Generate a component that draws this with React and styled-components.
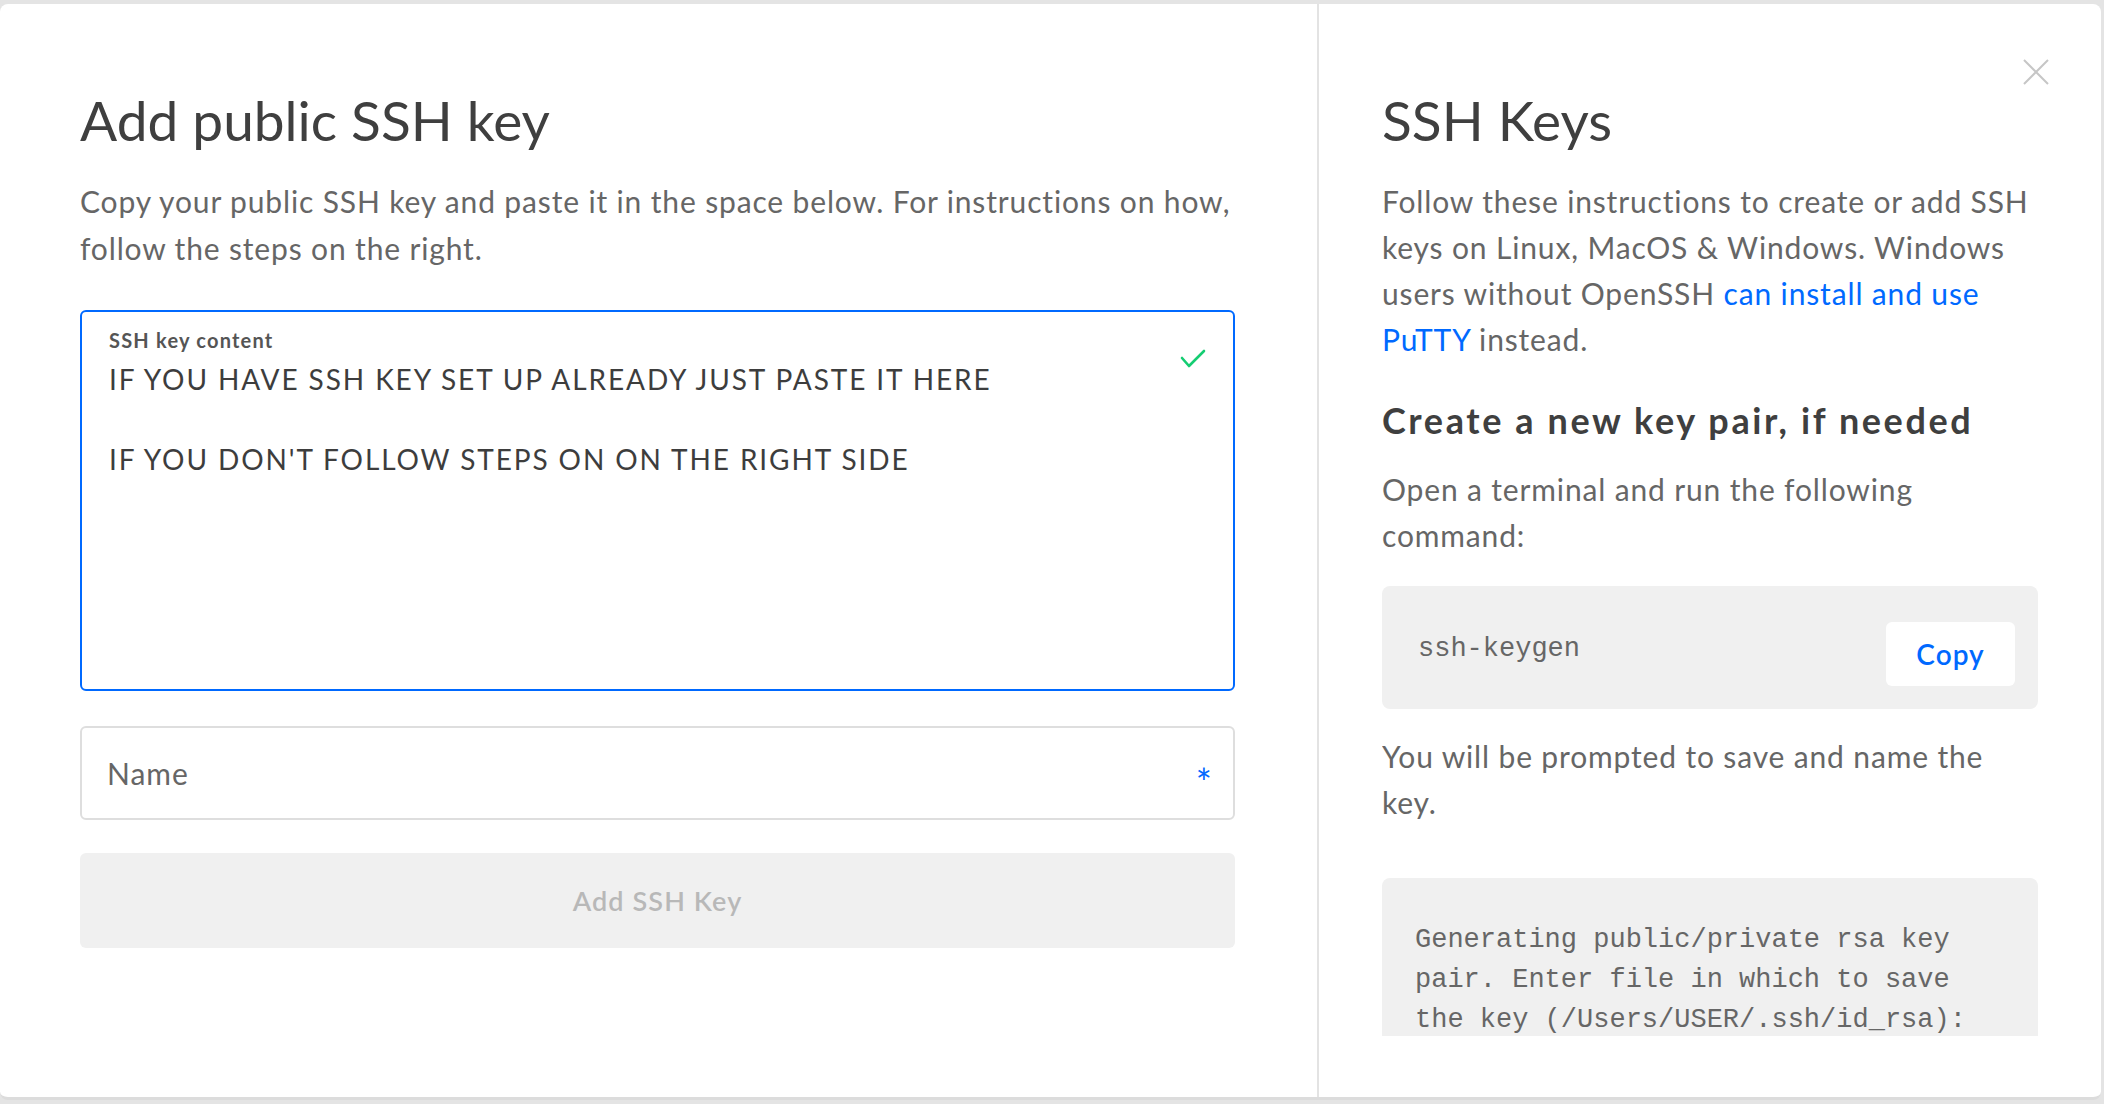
import React from 'react';
import styled, { createGlobalStyle } from 'styled-components';

const GlobalStyle = createGlobalStyle`
    body {
        margin: 0;
        background-color: #e4e4e4;
        font-family: Lato, "Open Sans", sans-serif;
    }
`;

const blue = '#0069ff';

let Page = styled.div`
    height: 1104px;
    padding-top: 4px;
    box-sizing: border-box;
    overflow: hidden;
`;

let Modal = styled.div`
    position: relative;
    width: 2101px;
    height: 1096px;
    background-color: #ffffff;
    border-radius: 8px;
    border-bottom: 3px solid #dcdcdc;
    box-sizing: border-box;
    display: grid;
    grid-template-columns: 1319px 1fr;
`;

let LeftPanel = styled.div`
    padding: 82px 82px 0 80px;
    border-right: 2px solid #e3e3e3;
    display: flex;
    flex-direction: column;
`;

let RightPanel = styled.div`
    padding: 82px 63px 61px 63px;
    display: flex;
    flex-direction: column;
    min-height: 0;
`;

let Scroll = styled.div`
    flex: 1;
    overflow: hidden;
`;

let Title = styled.h2`
    margin: 0;
    font-size: 55px;
    line-height: 68px;
    font-weight: 400;
    color: #3f3f3f;
`;

let SubTitle = styled.h3`
    margin: 36px 0 0;
    font-size: 36px;
    line-height: 44px;
    font-weight: 700;
    letter-spacing: 2.6px;
    color: #3f3f3f;
`;

let Text = styled.p`
    margin: ${(p) => p.$top || 24}px 0 0;
    font-size: 30px;
    line-height: ${(p) => p.$lh || 46}px;
    letter-spacing: 0.85px;
    color: #666666;
`;

let Link = styled.a`
    color: ${blue};
    text-decoration: none;
`;

let KeyBox = styled.div`
    position: relative;
    margin-top: 38px;
    height: 381px;
    box-sizing: border-box;
    border: 2px solid ${blue};
    border-radius: 6px;
    padding: 16px 27px 0 27px;
    display: flex;
    flex-direction: column;
`;

let FieldLabel = styled.label`
    font-size: 20px;
    line-height: 24px;
    font-weight: 700;
    letter-spacing: 1.2px;
    color: #555555;
`;

let KeyArea = styled.textarea`
    flex: 1;
    margin-top: 7px;
    padding: 0;
    border: none;
    outline: none;
    resize: none;
    font-family: Lato, "Open Sans", sans-serif;
    font-size: 28px;
    line-height: 40px;
    letter-spacing: 1.9px;
    color: #3d3d3d;
    background: transparent;
`;

let CheckIcon = styled.svg`
    position: absolute;
    top: 37px;
    right: 27px;
`;

let NameField = styled.div`
    margin-top: 35px;
    height: 94px;
    box-sizing: border-box;
    border: 2px solid #dedede;
    border-radius: 6px;
    padding: 0 20px 0 25px;
    display: flex;
    align-items: center;
    font-size: 30px;
    letter-spacing: 1px;
    color: #666666;
`;

let Required = styled.span`
    margin-left: auto;
    color: ${blue};
    font-size: 38px;
    line-height: 1;
    transform: translateY(9px);
`;

let SubmitButton = styled.button`
    margin-top: 33px;
    height: 95px;
    border: none;
    border-radius: 6px;
    background-color: #f0f0f0;
    font-family: Lato, "Open Sans", sans-serif;
    font-size: 27px;
    font-weight: 600;
    letter-spacing: 1.1px;
    color: #b8b8b8;
`;

let CloseButton = styled.button`
    position: absolute;
    top: 53px;
    right: 50px;
    padding: 0;
    border: none;
    background: none;
    display: flex;
`;

let CodeBlock = styled.div`
    margin-top: ${(p) => p.$top}px;
    background-color: #f0f0f0;
    border-radius: 8px;
`;

let CommandRow = styled(CodeBlock)`
    height: 123px;
    box-sizing: border-box;
    padding: 3px 23px 0 36px;
    display: flex;
    align-items: center;
    justify-content: space-between;
`;

let Code = styled.code`
    font-family: "Liberation Mono", "DejaVu Sans Mono", monospace;
    font-size: 27px;
    line-height: 40px;
    color: #666666;
`;

let Output = styled(CodeBlock)`
    padding: 42px 40px 20px 33px;
`;

let OutputText = styled(Code)`
    display: block;
    white-space: pre-wrap;
`;

let CopyButton = styled.button`
    margin-top: 10px;
    width: 129px;
    height: 64px;
    border: none;
    border-radius: 6px;
    background-color: #ffffff;
    font-family: Lato, "Open Sans", sans-serif;
    font-size: 28px;
    font-weight: 600;
    letter-spacing: 1px;
    color: ${blue};
`;

const App = () => {
    return (
        <Page>
            <GlobalStyle />
            <Modal>
                <LeftPanel>
                    <Title>Add public SSH key</Title>
                    <Text $lh={47}>
                        Copy your public SSH key and paste it in the space below. For instructions on how,
                        follow the steps on the right.
                    </Text>
                    <KeyBox>
                        <FieldLabel>SSH key content</FieldLabel>
                        <KeyArea
                            readOnly
                            value={'IF YOU HAVE SSH KEY SET UP ALREADY JUST PASTE IT HERE\n\nIF YOU DON\'T FOLLOW STEPS ON ON THE RIGHT SIDE'}
                        />
                        <CheckIcon width="26" height="20" viewBox="0 0 26 20">
                            <polyline
                                points="2,9 9,17 24,2"
                                fill="none"
                                stroke="#15cd72"
                                strokeWidth="2.6"
                                strokeLinecap="round"
                                strokeLinejoin="round"
                            />
                        </CheckIcon>
                    </KeyBox>
                    <NameField>
                        Name
                        <Required>*</Required>
                    </NameField>
                    <SubmitButton disabled>Add SSH Key</SubmitButton>
                </LeftPanel>

                <RightPanel>
                    <Scroll>
                        <Title>SSH Keys</Title>
                        <Text>
                            Follow these instructions to create or add SSH keys on Linux, MacOS &amp; Windows.
                            Windows users without OpenSSH <Link href="#">can install and use PuTTY</Link> instead.
                        </Text>
                        <SubTitle>Create a new key pair, if needed</SubTitle>
                        <Text>Open a terminal and run the following command:</Text>
                        <CommandRow $top={28}>
                            <Code>ssh-keygen</Code>
                            <CopyButton>Copy</CopyButton>
                        </CommandRow>
                        <Text>You will be prompted to save and name the key.</Text>
                        <Output $top={53}>
                            <OutputText>
                                Generating public/private rsa key pair. Enter file in which to save the key (/Users/USER/.ssh/id_rsa):
                            </OutputText>
                        </Output>
                    </Scroll>
                </RightPanel>

                <CloseButton aria-label="Close">
                    <svg width="30" height="30" viewBox="0 0 30 30">
                        <path d="M3 3 L27 27 M27 3 L3 27" stroke="#c6c6c6" strokeWidth="2" />
                    </svg>
                </CloseButton>
            </Modal>
        </Page>
    );
};

export default App;
